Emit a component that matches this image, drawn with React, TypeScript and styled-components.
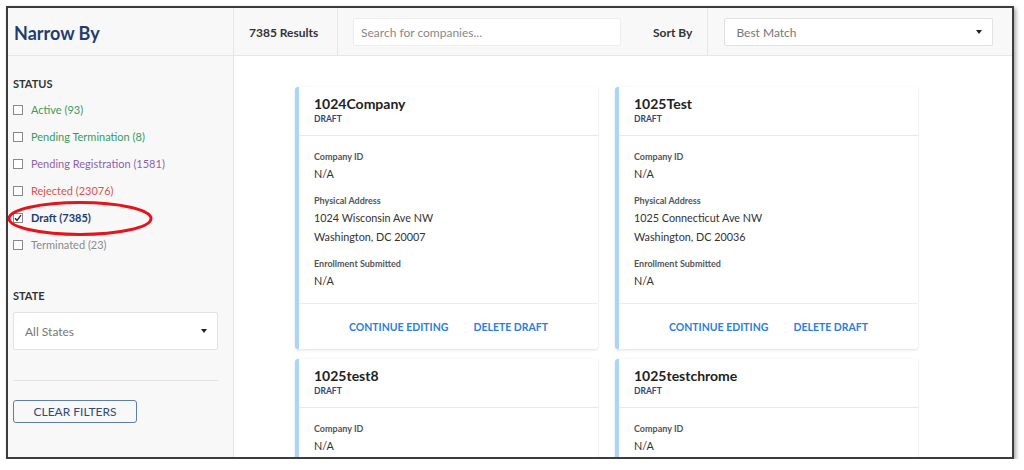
import React from "react";
import styled, { createGlobalStyle } from "styled-components";

const Global = createGlobalStyle`
  html, body { margin: 0; padding: 0; background: #ffffff; }
  body { font-family: Lato, "Open Sans", Arial, sans-serif; color: #333; }
  * { box-sizing: border-box; }
`;

const Frame = styled.div`
  position: relative;
  margin: 6px 0 0 6px;
  width: 1008px;
  height: 453px;
  border: 2px solid #3c3c3c;
  box-shadow: 2px 2px 4px rgba(0, 0, 0, 0.35);
  display: flex;
  overflow: hidden;
  background: #fff;
`;

const Sidebar = styled.aside`
  width: 226px;
  flex: none;
  background: #f8f8f8;
  border-right: 1px solid #e6e6e6;
  display: flex;
  flex-direction: column;
`;

const SideHeader = styled.div`
  height: 48px;
  border-bottom: 1px solid #e6e6e6;
  display: flex;
  align-items: center;
  padding: 2px 0 0 6px;
  font-size: 18px;
  font-weight: 700;
  color: #1f3d6d;
`;

const SideBody = styled.div`
  padding: 21px 15px 0 5px;
  display: flex;
  flex-direction: column;
`;

const SectionTitle = styled.div`
  font-size: 11px;
  font-weight: 700;
  color: #333;
  line-height: 14px;
  margin-bottom: 12px;
`;

const StatusList = styled.div`
  display: flex;
  flex-direction: column;
  gap: 13px;
`;

const StatusRow = styled.label<{ $color: string; $bold?: boolean }>`
  display: flex;
  align-items: center;
  gap: 8px;
  font-size: 11px;
  line-height: 14px;
  color: ${(p) => p.$color};
  font-weight: ${(p) => (p.$bold ? 700 : 400)};
`;

const Box = styled.span`
  width: 10px;
  height: 10px;
  border: 1px solid #8a8a8a;
  background: #fff;
  display: inline-flex;
  align-items: center;
  justify-content: center;
  flex: none;
`;

const StateTitle = styled(SectionTitle)`
  margin-top: 37px;
  margin-bottom: 9px;
`;

const SelectBox = styled.div<{ $h: number; $grow?: boolean }>`
  height: ${(p) => p.$h}px;
  ${(p) => (p.$grow ? "flex: 1;" : "")}
  background: #fff;
  border: 1px solid #e2e2e2;
  border-radius: 2px;
  display: flex;
  align-items: center;
  justify-content: space-between;
  padding: 0 10px 0 11px;
  font-size: 12px;
  color: #777;
`;

const Caret = styled.span`
  width: 0;
  height: 0;
  border-left: 3.5px solid transparent;
  border-right: 3.5px solid transparent;
  border-top: 4px solid #222;
`;

const Divider = styled.div`
  height: 1px;
  background: #e4e4e4;
  margin: 30px 0 19px;
`;

const ClearButton = styled.button`
  width: 124px;
  height: 23px;
  border: 1px solid #5f7fa6;
  border-radius: 3px;
  background: #f8f8f8;
  color: #2e4c76;
  font-family: Lato, Arial, sans-serif;
  font-size: 12px;
  padding: 0;
`;

const Main = styled.main`
  flex: 1;
  display: flex;
  flex-direction: column;
  min-width: 0;
`;

const TopBar = styled.div`
  height: 48px;
  flex: none;
  background: #f8f8f8;
  border-bottom: 1px solid #e6e6e6;
  display: flex;
  align-items: stretch;
`;

const Cell = styled.div<{ $pl: number; $pr: number; $w?: number; $divider?: boolean; $grow?: boolean }>`
  display: flex;
  align-items: center;
  padding: 1px ${(p) => p.$pr}px 0 ${(p) => p.$pl}px;
  ${(p) => (p.$w ? `width: ${p.$w}px; flex: none;` : "")}
  ${(p) => (p.$divider ? "border-right: 1px solid #e6e6e6;" : "")}
  ${(p) => (p.$grow ? "flex: 1;" : "")}
`;

const BarLabel = styled.span`
  font-size: 12px;
  font-weight: 700;
  color: #333;
`;

const SearchInput = styled.div`
  width: 268px;
  height: 28px;
  background: #fff;
  border: 1px solid #eeeeee;
  border-radius: 2px;
  display: flex;
  align-items: center;
  padding-left: 7px;
  font-size: 12px;
  color: #888;
`;

const Content = styled.div`
  flex: 1;
  padding: 31px 0 0 61px;
  display: grid;
  grid-template-columns: 303px 303px;
  column-gap: 17px;
  row-gap: 10px;
  align-content: start;
`;

const Card = styled.div`
  background: #fff;
  border-left: 4px solid #a9d5f8;
  border-radius: 3px;
  box-shadow: 0 1px 3px rgba(0, 0, 0, 0.13);
  display: flex;
  flex-direction: column;
`;

const CardHeader = styled.div`
  padding: 8px 15px 10px;
  border-bottom: 1px solid #e8e8e8;
`;

const CardTitle = styled.div`
  font-size: 14px;
  font-weight: 700;
  color: #222;
  line-height: 18px;
`;

const Badge = styled.div`
  margin-top: 1px;
  font-size: 8.5px;
  font-weight: 700;
  color: #2c4a78;
  line-height: 11px;
`;

const CardBody = styled.div`
  padding: 14px 15px 13px;
  display: flex;
  flex-direction: column;
  gap: 11px;
  border-bottom: 1px solid #ececec;
`;

const Field = styled.div`
  display: flex;
  flex-direction: column;
`;

const FieldLabel = styled.div`
  font-size: 9px;
  font-weight: 700;
  color: #555;
  line-height: 14px;
`;

const FieldValue = styled.div`
  font-size: 10.8px;
  color: #333;
  line-height: 19px;
`;

const CardFooter = styled.div`
  height: 45px;
  display: flex;
  align-items: center;
  justify-content: center;
  gap: 25px;
`;

const Action = styled.span`
  font-size: 10.5px;
  font-weight: 700;
  color: #2b80d6;
`;

const Annotation = styled.svg`
  position: absolute;
  left: -2px;
  top: 192px;
  pointer-events: none;
`;

const statuses = [
  { label: "Active (93)", color: "#3b9a5f" },
  { label: "Pending Termination (8)", color: "#3b9a5f" },
  { label: "Pending Registration (1581)", color: "#8c62aa" },
  { label: "Rejected (23076)", color: "#d9534f" },
  { label: "Draft (7385)", color: "#1f3d6d", checked: true },
  { label: "Terminated (23)", color: "#8a8a8a" },
];

type Company = {
  name: string;
  street: string;
  city: string;
};

const companies: Company[] = [
  { name: "1024Company", street: "1024 Wisconsin Ave NW", city: "Washington, DC 20007" },
  { name: "1025Test", street: "1025 Connecticut Ave NW", city: "Washington, DC 20036" },
  { name: "1025test8", street: "1025 Connecticut Ave NW", city: "Washington, DC 20036" },
  { name: "1025testchrome", street: "1025 Connecticut Ave NW", city: "Washington, DC 20036" },
];

function CompanyCard({ c }: { c: Company }) {
  return (
    <Card>
      <CardHeader>
        <CardTitle>{c.name}</CardTitle>
        <Badge>DRAFT</Badge>
      </CardHeader>
      <CardBody>
        <Field>
          <FieldLabel>Company ID</FieldLabel>
          <FieldValue>N/A</FieldValue>
        </Field>
        <Field>
          <FieldLabel>Physical Address</FieldLabel>
          <FieldValue>{c.street}</FieldValue>
          <FieldValue>{c.city}</FieldValue>
        </Field>
        <Field>
          <FieldLabel>Enrollment Submitted</FieldLabel>
          <FieldValue>N/A</FieldValue>
        </Field>
      </CardBody>
      <CardFooter>
        <Action>CONTINUE EDITING</Action>
        <Action>DELETE DRAFT</Action>
      </CardFooter>
    </Card>
  );
}

export default function App() {
  return (
    <>
      <Global />
      <Frame>
        <Sidebar>
          <SideHeader>Narrow By</SideHeader>
          <SideBody>
            <SectionTitle>STATUS</SectionTitle>
            <StatusList>
              {statuses.map((s) => (
                <StatusRow key={s.label} $color={s.color} $bold={s.checked}>
                  <Box>
                    {s.checked && (
                      <svg width="8" height="8" viewBox="0 0 8 8">
                        <path d="M1 4.2 L3 6.4 L7 1.2" fill="none" stroke="#222" strokeWidth="1.3" />
                      </svg>
                    )}
                  </Box>
                  {s.label}
                </StatusRow>
              ))}
            </StatusList>
            <StateTitle>STATE</StateTitle>
            <SelectBox $h={38}>
              All States
              <Caret />
            </SelectBox>
            <Divider />
            <div>
              <ClearButton>CLEAR FILTERS</ClearButton>
            </div>
          </SideBody>
        </Sidebar>
        <Main>
          <TopBar>
            <Cell $pl={15} $pr={0} $w={104} $divider>
              <BarLabel>7385 Results</BarLabel>
            </Cell>
            <Cell $pl={15} $pr={16}>
              <SearchInput>Search for companies...</SearchInput>
            </Cell>
            <Cell $pl={16} $pr={15} $divider>
              <BarLabel>Sort By</BarLabel>
            </Cell>
            <Cell $pl={16} $pr={19} $grow>
              <SelectBox $h={28} $grow>
                Best Match
                <Caret />
              </SelectBox>
            </Cell>
          </TopBar>
          <Content>
            {companies.map((c) => (
              <CompanyCard key={c.name} c={c} />
            ))}
          </Content>
        </Main>
        <Annotation width="148" height="38" viewBox="0 0 148 38">
          <ellipse cx="74" cy="18.5" rx="71" ry="16" fill="none" stroke="#e3151c" strokeWidth="3" />
        </Annotation>
      </Frame>
    </>
  );
}
